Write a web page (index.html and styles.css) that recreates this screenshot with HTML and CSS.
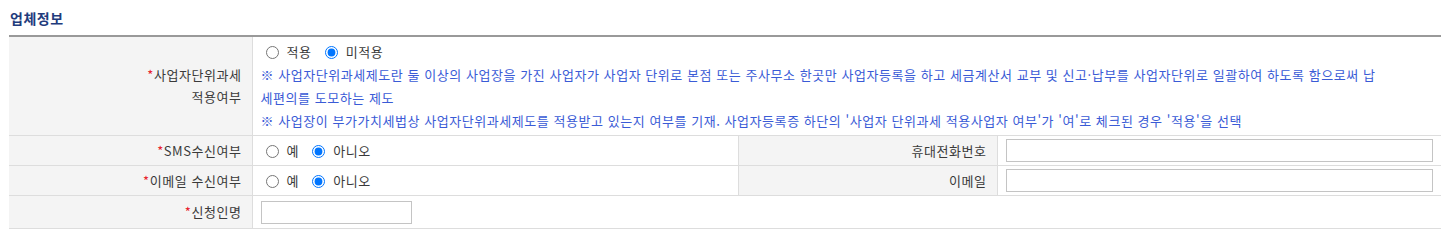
FILE: index.html
```html
<!DOCTYPE html>
<html lang="ko">
<head>
  <meta charset="UTF-8">
  <title>업체정보</title>
  <link rel="stylesheet" href="styles.css">
</head>
<body>

  <h3 class="tit">업체정보</h3>

  <table class="tbl-form">
    <colgroup>
      <col class="c-th">
      <col class="c-td">
      <col class="c-th2">
      <col>
    </colgroup>
    <tr class="row-tall">
      <th><span class="req">*</span>사업자단위과세<br>적용여부</th>
      <td colspan="3">
        <div class="radios">
          <label><input type="radio" name="unit">적용</label>
          <label><input type="radio" name="unit" checked>미적용</label>
        </div>
        <p class="note">※ 사업자단위과세제도란 둘 이상의 사업장을 가진 사업자가 사업자 단위로 본점 또는 주사무소 한곳만 사업자등록을 하고 세금계산서 교부 및 신고·납부를 사업자단위로 일괄하여 하도록 함으로써 납세편의를 도모하는 제도</p>
        <p class="note">※ 사업장이 부가가치세법상 사업자단위과세제도를 적용받고 있는지 여부를 기재. 사업자등록증 하단의 '사업자 단위과세 적용사업자 여부'가 '여'로 체크된 경우 '적용'을 선택</p>
      </td>
    </tr>
    <tr>
      <th><span class="req">*</span>SMS수신여부</th>
      <td>
        <div class="radios">
          <label><input type="radio" name="sms">예</label>
          <label><input type="radio" name="sms" checked>아니오</label>
        </div>
      </td>
      <th>휴대전화번호</th>
      <td><input type="text" class="inp-full"></td>
    </tr>
    <tr>
      <th><span class="req">*</span>이메일 수신여부</th>
      <td>
        <div class="radios">
          <label><input type="radio" name="mail">예</label>
          <label><input type="radio" name="mail" checked>아니오</label>
        </div>
      </td>
      <th>이메일</th>
      <td><input type="text" class="inp-full"></td>
    </tr>
    <tr class="row-last">
      <th><span class="req">*</span>신청인명</th>
      <td colspan="3"><input type="text" class="inp-name"></td>
    </tr>
  </table>

</body>
</html>
```

FILE: styles.css
```css
body {
  margin: 0;
  padding: 8px 10px 0 9px;
  font-family: "Noto Sans CJK KR", "Noto Sans", sans-serif;
  font-size: 13px;
  letter-spacing: 0.55px;
  color: #3a3a3a;
  background: white;
}

.tit {
  margin: 0 0 7px 1px;
  font-size: 14px;
  font-weight: bold;
  color: #223b7c;
  line-height: 20px;
}

.tbl-form {
  width: 100%;
  border-collapse: collapse;
  border-top: 2px solid #999;
}

.c-th {
  width: 243px;
}

.c-td {
  width: 486px;
}

.c-th2 {
  width: 259px;
}

.tbl-form th,
.tbl-form td {
  border-bottom: 1px solid #ddd;
  border-left: 1px solid #ddd;
  height: 29px;
  padding: 0 8px;
  line-height: 22px;
}

.tbl-form th:first-child {
  border-left: none;
}

.tbl-form th {
  background: #f4f4f4;
  font-weight: normal;
  text-align: right;
  padding-right: 10px;
}

.row-tall th,
.row-tall td {
  height: 92px;
}

.row-tall td {
  padding-top: 3px;
  padding-bottom: 3px;
}

.row-last th,
.row-last td {
  height: 32px;
}

.req {
  color: #e8232e;
}

.radios {
  height: 22px;
  line-height: 22px;
}

.radios label {
  margin-right: 4px;
}

.radios input {
  margin: 0 8px 0 5px;
  width: 13px;
  height: 13px;
  vertical-align: -2px;
}

.note {
  margin: 0;
  padding-right: 56px;
  color: #3a5bd6;
  line-height: 23px;
  word-break: break-all;
}

.inp-full,
.inp-name {
  height: 23px;
  box-sizing: border-box;
  border: 1px solid #c4c4c4;
  padding: 0 5px;
  font-family: inherit;
  font-size: 13px;
}

.inp-full {
  width: 100%;
}

.inp-name {
  width: 151px;
}
```
